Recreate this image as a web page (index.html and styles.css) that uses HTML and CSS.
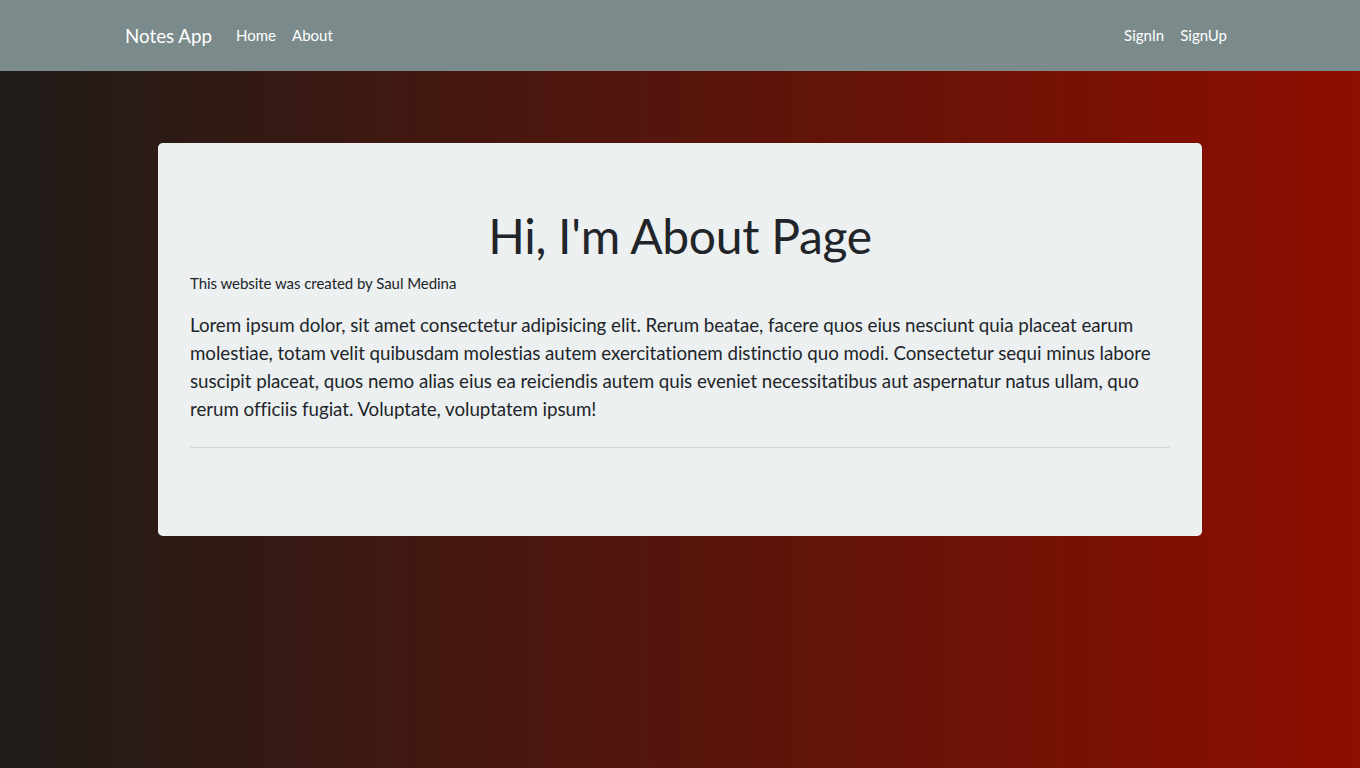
FILE: index.html
```html
<!DOCTYPE html>
<html lang="en">
<head>
<meta charset="utf-8">
<title>Notes App</title>
<link rel="stylesheet" href="styles.css">
</head>
<body>
<nav class="navbar">
  <div class="nav-container">
    <a class="brand" href="#">Notes App</a>
    <ul class="nav-links">
      <li><a class="nav-link" href="#">Home</a></li>
      <li><a class="nav-link" href="#">About</a></li>
    </ul>
    <ul class="nav-links nav-right">
      <li><a class="nav-link" href="#">SignIn</a></li>
      <li><a class="nav-link" href="#">SignUp</a></li>
    </ul>
  </div>
</nav>
<main class="page">
  <section class="jumbotron">
    <h1 class="title">Hi, I'm About Page</h1>
    <p class="credit">This website was created by Saul Medina</p>
    <p class="lead">Lorem ipsum dolor, sit amet consectetur adipisicing elit. Rerum beatae, facere quos eius nesciunt quia placeat earum molestiae, totam velit quibusdam molestias autem exercitationem distinctio quo modi. Consectetur sequi minus labore suscipit placeat, quos nemo alias eius ea reiciendis autem quis eveniet necessitatibus aut aspernatur natus ullam, quo rerum officiis fugiat. Voluptate, voluptatem ipsum!</p>
    <hr class="divider">
  </section>
</main>
</body>
</html>
```

FILE: styles.css
```css
html, body {
  margin: 0;
  padding: 0;
}
body {
  min-height: 768px;
  font-family: Lato, "Liberation Sans", sans-serif;
  font-size: 15px;
  line-height: 1.5;
  color: #212529;
  background: linear-gradient(to right, #1f1c18, #8e0e00);
}
.navbar {
  background: #7b8a8b;
  padding: 16px 0;
  height: 39px;
}
.nav-container {
  max-width: 1110px;
  margin: 0 auto;
  display: flex;
  align-items: center;
  height: 39px;
}
.brand {
  color: #fff;
  text-decoration: none;
  font-size: 18.75px;
  line-height: 28px;
  padding: 5px 0;
  margin-right: 16px;
}
.nav-links {
  list-style: none;
  margin: 0;
  padding: 0;
  display: flex;
}
.nav-right {
  margin-left: auto;
}
.nav-link {
  display: block;
  color: #fff;
  text-decoration: none;
  padding: 8px;
}
.page {
  padding-top: 72px;
}
.jumbotron {
  width: 980px;
  margin: 0 auto;
  background: #ecf0f1;
  border-radius: 4.8px;
  padding: 64px 32px;
}
.title {
  margin: 0 0 8px;
  text-align: center;
  font-size: 48px;
  font-weight: 400;
  line-height: 57px;
  letter-spacing: -0.3px;
}
.credit {
  margin: 0 0 16px;
  font-size: 15px;
  letter-spacing: -0.05px;
}
.lead {
  margin: 0;
  font-size: 18.75px;
  line-height: 28.125px;
  letter-spacing: -0.05px;
}
.divider {
  margin: 24px 0;
  border: 0;
  border-top: 1px solid rgba(0, 0, 0, 0.1);
  height: 0;
}
```
